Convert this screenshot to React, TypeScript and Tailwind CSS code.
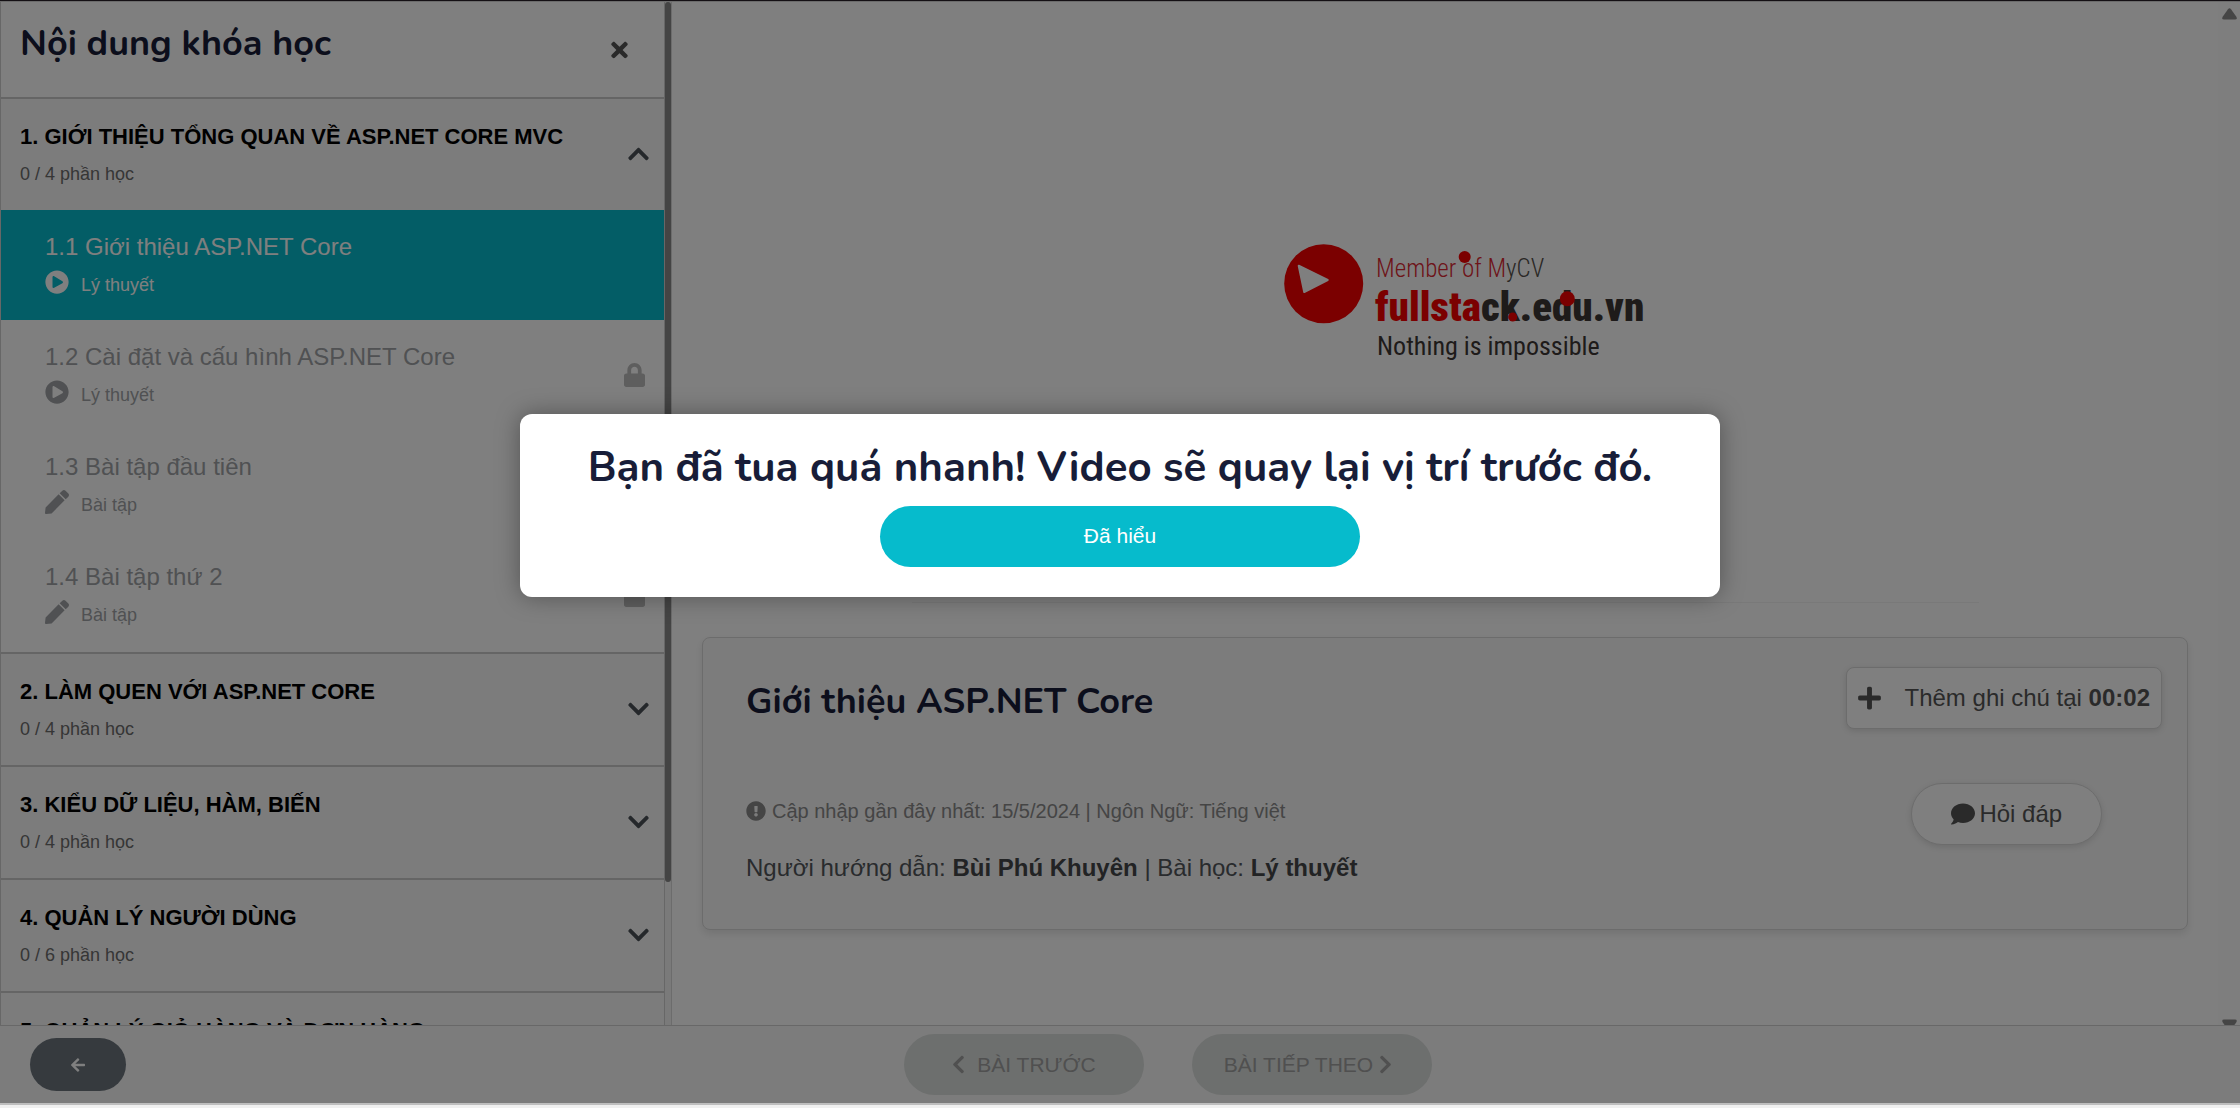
import React from 'react';
import {
  FaArrowLeft,
  FaChevronDown,
  FaChevronLeft,
  FaChevronRight,
  FaChevronUp,
  FaComment,
  FaExclamationCircle,
  FaLock,
  FaPen,
  FaPlayCircle,
  FaPlus,
  FaTimes,
} from 'react-icons/fa';

type Lesson = { title: string; kind: 'theory' | 'exercise'; state: 'active' | 'locked' };
type Section = { title: string; progress: string; lessons?: Lesson[] };

const SECTIONS: Section[] = [
  {
    title: '1. GIỚI THIỆU TỔNG QUAN VỀ ASP.NET CORE MVC',
    progress: '0 / 4 phần học',
    lessons: [
      { title: '1.1 Giới thiệu ASP.NET Core', kind: 'theory', state: 'active' },
      { title: '1.2 Cài đặt và cấu hình ASP.NET Core', kind: 'theory', state: 'locked' },
      { title: '1.3 Bài tập đầu tiên', kind: 'exercise', state: 'locked' },
      { title: '1.4 Bài tập thứ 2', kind: 'exercise', state: 'locked' },
    ],
  },
  { title: '2. LÀM QUEN VỚI ASP.NET CORE', progress: '0 / 4 phần học' },
  { title: '3. KIỂU DỮ LIỆU, HÀM, BIẾN', progress: '0 / 4 phần học' },
  { title: '4. QUẢN LÝ NGƯỜI DÙNG', progress: '0 / 6 phần học' },
  { title: '5. QUẢN LÝ GIỎ HÀNG VÀ ĐƠN HÀNG', progress: '0 / 5 phần học' },
];

function LessonRow({ lesson }: { lesson: Lesson }) {
  const active = lesson.state === 'active';
  const Icon = lesson.kind === 'theory' ? FaPlayCircle : FaPen;
  return (
    <li>
      <button
        type="button"
        className={
          active
            ? 'flex w-full items-center justify-between bg-[#06bbcc] pt-5 pr-[19px] pb-[21px] pl-11 text-left text-white'
            : 'flex w-full items-center justify-between bg-white pt-5 pr-[19px] pb-[21px] pl-11 text-left text-[#a0a3a6]'
        }
      >
        <span>
          <span className="block text-2xl leading-[34px]">{lesson.title}</span>
          <span className="mt-1.5 flex items-start gap-3">
            <Icon className="size-6" />
            <span className="mt-0.5 text-lg leading-[27px]">
              {lesson.kind === 'theory' ? 'Lý thuyết' : 'Bài tập'}
            </span>
          </span>
        </span>
        {!active && <FaLock className="h-6 w-[21px] text-[#bcbcbc]" />}
      </button>
    </li>
  );
}

function SectionBlock({ section }: { section: Section }) {
  const open = Boolean(section.lessons);
  const Chevron = open ? FaChevronUp : FaChevronDown;
  return (
    <section className="border-t-2 border-[#cacaca]">
      <button
        type="button"
        aria-expanded={open}
        className="flex w-full items-center justify-between bg-[#f8f8f8] pt-[21px] pr-[15px] pb-[22px] pl-[19px] text-left"
      >
        <span>
          <span className="block text-[22px] leading-[33px] font-bold text-black">{section.title}</span>
          <span className="mt-2 block text-lg leading-[27px] text-[#6c6c6c]">{section.progress}</span>
        </span>
        <Chevron className="h-6 w-[21px] text-[#4a5057]" />
      </button>
      {section.lessons && (
        <ul className="pb-0.5">
          {section.lessons.map((l) => (
            <LessonRow key={l.title} lesson={l} />
          ))}
        </ul>
      )}
    </section>
  );
}

function Sidebar() {
  return (
    <aside className="flex w-[30%] shrink-0 border-r border-[#d8d8d8]">
      <div className="min-w-0 flex-1 overflow-hidden border-x border-[#cfcfcf]">
        <header className="flex h-[95px] items-center justify-between pr-9 pl-[19px]">
          <h2 className="pb-3 font-['Nunito','Open_Sans',sans-serif] text-4xl leading-[51px] font-bold text-[#181d38]">
            Nội dung khóa học
          </h2>
          <button type="button" aria-label="Đóng" className="text-[#555]">
            <FaTimes className="h-6 w-[17px]" />
          </button>
        </header>
        {SECTIONS.map((s) => (
          <SectionBlock key={s.title} section={s} />
        ))}
      </div>
      <div className="w-1.5 bg-[#f5f5f5]">
        <div className="h-[86%] rounded-full bg-[#888]" />
      </div>
    </aside>
  );
}

function Logo() {
  return (
    <svg width="376" height="120" viewBox="0 0 376 120" role="img" aria-label="fullstack.edu.vn">
      <circle cx="43.7" cy="42.7" r="39.5" fill="#f60000" />
      <path
        d="M18.7 24.7 47.7 39 24.2 51Z"
        fill="#fff"
        stroke="#fff"
        strokeWidth="2"
        strokeLinejoin="round"
      />
      <g fontFamily="'Roboto Condensed', Roboto, sans-serif">
        <text x="96" y="36" fontSize="25" fontWeight="300" fill="#dc2832">
          Member of M<tspan fill="#55504c">yCV</tspan>
        </text>
        <text x="95" y="80" fontSize="41" fontWeight="900" fill="#f60000">
          fullsta<tspan fill="#3c3634">ck.edu.vn</tspan>
        </text>
        <text x="97" y="114" fontSize="26" fontWeight="400" fill="#3c3634">
          Nothing is impossible
        </text>
      </g>
      <circle cx="184.7" cy="16" r="6" fill="#f60000" />
      <circle cx="287.3" cy="57.7" r="7.5" fill="#f60000" />
      <circle cx="232.7" cy="76" r="4.5" fill="#f60000" />
    </svg>
  );
}

function LessonCard() {
  return (
    <article className="mt-[34px] flex items-start justify-between rounded-lg border border-[#d9d9d9] bg-[#f8f8f8] pr-[25px] pl-[43px] shadow-[0_4px_8px_rgba(0,0,0,0.1)]">
      <div className="pt-[38px] pb-[43px]">
        <h1 className="font-['Nunito','Open_Sans',sans-serif] text-4xl leading-[52px] font-bold text-[#181d38]">
          Giới thiệu ASP.NET Core
        </h1>
        <p className="mt-[68px] flex items-center gap-1.5 text-xl leading-[30px] text-[#8a8a8a]">
          <FaExclamationCircle className="size-5" />
          <span>Cập nhập gần đây nhất: 15/5/2024 | Ngôn Ngữ: Tiếng việt</span>
        </p>
        <p className="mt-6 text-2xl leading-9 text-[#52565b]">
          Người hướng dẫn: <b className="text-[#444649]">Bùi Phú Khuyên</b> | Bài học:{' '}
          <b className="text-[#444649]">Lý thuyết</b>
        </p>
      </div>
      <div className="flex flex-col items-center gap-[54px] pt-[29px]">
        <button
          type="button"
          className="flex h-[62px] items-center rounded-lg border border-[#d9d9d9] bg-white px-[11px] text-2xl text-[#555] shadow-[0_2px_6px_rgba(0,0,0,0.12)]"
        >
          <FaPlus className="h-[26px] w-[23px]" />
          <span className="ml-6">
            Thêm ghi chú tại <b>00:02</b>
          </span>
        </button>
        <button
          type="button"
          className="ml-1.5 flex h-[62px] items-center gap-1 rounded-full border border-[#d9d9d9] bg-white px-[39px] text-2xl text-[#555] shadow-[0_2px_6px_rgba(0,0,0,0.12)]"
        >
          <FaComment className="size-6" />
          <span>Hỏi đáp</span>
        </button>
      </div>
    </article>
  );
}

function Footer() {
  return (
    <footer className="flex h-[78px] shrink-0 items-center border-t border-[#d0d0d0] bg-[#f8f8f8] px-[30px]">
      <button
        type="button"
        aria-label="Quay lại"
        className="flex h-[53px] w-24 items-center justify-center rounded-full bg-[#6c757d] text-white"
      >
        <FaArrowLeft className="h-4 w-3.5" />
      </button>
      <div className="flex flex-1 justify-center gap-12 text-[21px] text-[#a0a0a0]">
        <button
          type="button"
          disabled
          className="flex h-[61px] w-60 items-center justify-center gap-3 rounded-full bg-[#dadedc]"
        >
          <FaChevronLeft className="h-[21px] w-[13px]" />
          BÀI TRƯỚC
        </button>
        <button
          type="button"
          disabled
          className="flex h-[61px] w-60 items-center justify-center gap-1.5 rounded-full bg-[#dadedc] pr-2"
        >
          BÀI TIẾP THEO
          <FaChevronRight className="h-[21px] w-[13px]" />
        </button>
      </div>
    </footer>
  );
}

function RewindDialog() {
  return (
    <div className="absolute inset-0 flex items-center justify-center bg-black/50 pb-[94px]">
      <div
        role="dialog"
        aria-labelledby="rewind-title"
        className="flex w-full max-w-[1200px] flex-col items-center rounded-xl bg-white py-[30px] shadow-[0_0_24px_rgba(0,0,0,0.35)]"
      >
        <h2
          id="rewind-title"
          className="mb-3.5 text-center font-['Nunito','Open_Sans',sans-serif] text-[42px] leading-[48px] font-bold text-[#181d38]"
        >
          Bạn đã tua quá nhanh! Video sẽ quay lại vị trí trước đó.
        </h2>
        <button type="button" className="h-[61px] w-2/5 rounded-full bg-[#06bbcc] text-[21px] text-white">
          Đã hiểu
        </button>
      </div>
    </div>
  );
}

export default function App() {
  return (
    <div className="flex h-screen flex-col bg-[#f0f0f0] font-['Liberation_Sans',Arial,sans-serif]">
      <div className="relative flex min-h-0 flex-1 flex-col border-t border-[#141014] bg-white">
        <div className="flex min-h-0 flex-1 border-t border-[#d6d6d6]">
          <Sidebar />
          <main className="flex min-w-0 flex-1">
            <div className="min-w-0 flex-1 overflow-hidden px-[30px]">
              <div className="mx-auto flex h-[601px] max-w-[1067px] items-center justify-center border-b border-[#f2f2f2] pb-0.5 pl-[46px]">
                <Logo />
              </div>
              <LessonCard />
            </div>
            <div className="flex w-[22px] flex-col items-center justify-between overflow-hidden bg-[#fcfcfc] pt-1.5">
              <svg width="15" height="12" viewBox="0 0 15 12" fill="#8a8a8a">
                <path d="M6 1.2Q7.5-.6 9 1.2L14.5 9Q15.4 11.5 13 11.5H2Q-.4 11.5.5 9Z" />
              </svg>
              <svg width="15" height="6" viewBox="0 0 15 6" fill="#8a8a8a">
                <path d="M2 .5H13Q15.4.5 14.5 3L12.4 6H2.6L.5 3Q-.4.5 2 .5Z" />
              </svg>
            </div>
          </main>
        </div>
        <Footer />
        <RewindDialog />
      </div>
      <div className="h-[5px] shrink-0 border-t-2 border-[#bebebe]" />
    </div>
  );
}
